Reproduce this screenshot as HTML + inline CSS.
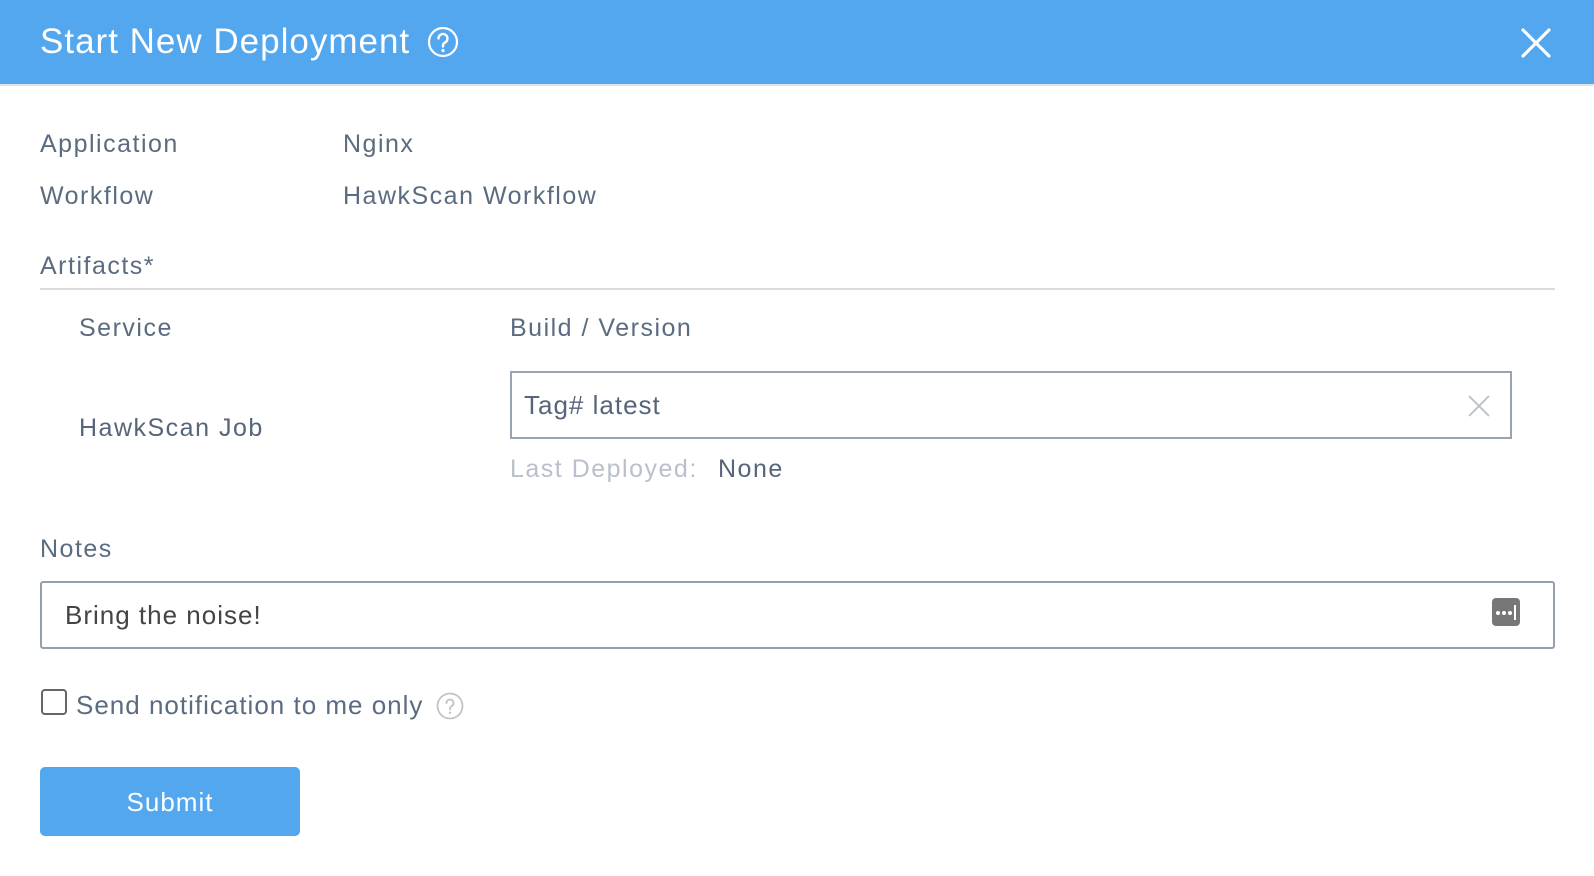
<!DOCTYPE html>
<html><head><style>
body{margin:0;width:1594px;height:876px;background:#fff;font-family:"Liberation Sans",sans-serif;color:#5b6b80;position:relative;overflow:hidden}
.a{position:absolute;white-space:nowrap;line-height:1}
.t{font-size:25px;letter-spacing:1.5px}
.hdr{position:absolute;left:0;top:0;width:1594px;height:84px;background:#53a7ef;border-bottom:2px solid #e2e4e7}
</style></head><body>
<div class="hdr"></div>
<div class="a" style="left:40px;top:24px;font-size:35px;letter-spacing:1px;color:#fff">Start New Deployment</div>
<svg class="a" style="left:427px;top:26px" width="32" height="32" viewBox="0 0 32 32"><circle cx="16" cy="16" r="14" fill="none" stroke="#fff" stroke-width="2.2"/><path d="M11.5 12.5a4.5 4.5 0 1 1 6.5 4c-1.3.7-2 1.5-2 3v1" fill="none" stroke="#fff" stroke-width="2.4" stroke-linecap="round"/><circle cx="16" cy="24.5" r="1.6" fill="#fff"/></svg>
<svg class="a" style="left:1521px;top:28px" width="30" height="30" viewBox="0 0 30 30"><path d="M2 2L28 28M28 2L2 28" stroke="#fff" stroke-width="3.2" stroke-linecap="round"/></svg>

<div class="a t" style="left:40px;top:132px">Application</div>
<div class="a t" style="left:343px;top:132px">Nginx</div>
<div class="a t" style="left:40px;top:184px">Workflow</div>
<div class="a t" style="left:343px;top:184px">HawkScan Workflow</div>
<div class="a t" style="left:40px;top:254px">Artifacts*</div>
<div class="a" style="left:40px;top:288px;width:1515px;height:2px;background:#d8dce1"></div>

<div class="a t" style="left:79px;top:316px">Service</div>
<div class="a t" style="left:510px;top:316px">Build / Version</div>
<div class="a t" style="left:79px;top:416px;color:#56657a">HawkScan Job</div>
<div class="a" style="left:510px;top:371px;width:998px;height:64px;border:2px solid #9aa3b1"></div>
<div class="a" style="left:524px;top:392px;font-size:26px;letter-spacing:1px;color:#56657a">Tag# latest</div>
<svg class="a" style="left:1468px;top:395px" width="22" height="22" viewBox="0 0 22 22"><path d="M1 1L21 21M21 1L1 21" stroke="#b8bfca" stroke-width="1.8"/></svg>
<div class="a t" style="left:510px;top:457px;color:#b9c0cb">Last Deployed:</div>
<div class="a t" style="left:718px;top:457px;color:#56657a">None</div>

<div class="a t" style="left:40px;top:537px">Notes</div>
<div class="a" style="left:40px;top:581px;width:1511px;height:64px;border:2px solid #959fae;border-radius:3px"></div>
<div class="a" style="left:65px;top:602px;font-size:26px;letter-spacing:1px;color:#444">Bring the noise!</div>
<div class="a" style="left:1492px;top:598px;width:28px;height:28px;background:#777;border-radius:4px"></div>
<div class="a" style="left:1496px;top:611px;width:4px;height:4px;background:#fff;border-radius:2px"></div>
<div class="a" style="left:1502px;top:611px;width:4px;height:4px;background:#fff;border-radius:2px"></div>
<div class="a" style="left:1508px;top:611px;width:4px;height:4px;background:#fff;border-radius:2px"></div>
<div class="a" style="left:1514px;top:605px;width:2px;height:15px;background:#fff"></div>

<div class="a" style="left:41px;top:689px;width:22px;height:22px;border:2px solid #666;border-radius:4px"></div>
<div class="a" style="left:76px;top:692px;font-size:26px;letter-spacing:1px">Send notification to me only</div>
<svg class="a" style="left:436px;top:692px" width="28" height="28" viewBox="0 0 28 28"><circle cx="14" cy="14" r="12.5" fill="none" stroke="#c3c3c3" stroke-width="1.8"/><path d="M10.5 11a3.5 3.5 0 1 1 5 3.2c-1 .5-1.5 1.2-1.5 2.3v.8" fill="none" stroke="#c3c3c3" stroke-width="1.9" stroke-linecap="round"/><circle cx="14" cy="20.8" r="1.2" fill="#c3c3c3"/></svg>

<div class="a" style="left:40px;top:767px;width:260px;height:69px;background:#53a7ef;border-radius:5px"></div>
<div class="a" style="left:40px;top:789px;width:260px;text-align:center;font-size:26px;letter-spacing:1px;color:#fff">Submit</div>
</body></html>
